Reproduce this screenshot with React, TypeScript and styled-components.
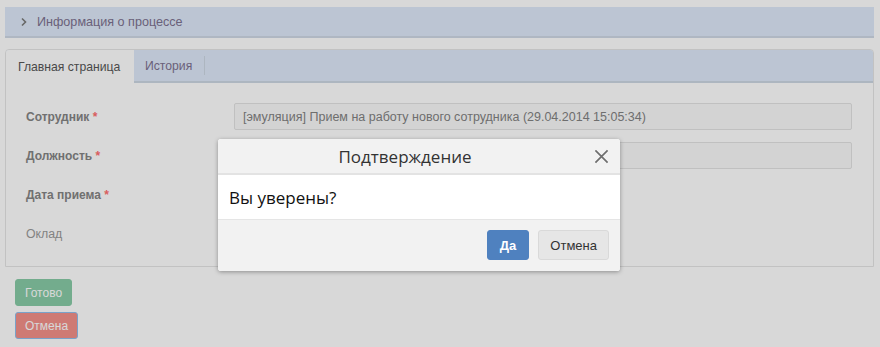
import styled, { createGlobalStyle } from "styled-components"

const Global = createGlobalStyle`
html, body {
  margin: 0;
  padding: 0;
  background: #ffffff;
}
body {
  font-family: "Liberation Sans", Arial, sans-serif;
  font-size: 12px;
}
`

const fields = [
  { label: "Сотрудник", required: true, value: "[эмуляция] Прием на работу нового сотрудника (29.04.2014 15:05:34)" },
  { label: "Должность", required: true, value: "" },
  { label: "Дата приема", required: true },
  { label: "Оклад", required: false },
]

const App = () => {
  return (
    <Page>
      <Global />
      <InfoBar>
        <Chevron viewBox="0 0 8 10">
          <path d="M2 1.5 L5.5 5 L2 8.5" fill="none" stroke="#7a7a7a" strokeWidth="1.6" />
        </Chevron>
        Информация о процессе
      </InfoBar>

      <TabPanel>
        <TabBar>
          <Tab $active>Главная страница</Tab>
          <Tab>История</Tab>
          <TabDivider />
        </TabBar>
        <Form>
          {fields.map((f) => (
            <Row key={f.label}>
              <Label $bold={f.required}>
                {f.label}
                {f.required && <Star> *</Star>}
              </Label>
              {f.value !== undefined && <Input>{f.value}</Input>}
            </Row>
          ))}
        </Form>
      </TabPanel>

      <Actions>
        <ActionButton $kind="ok">Готово</ActionButton>
        <ActionButton $kind="cancel">Отмена</ActionButton>
      </Actions>

      <Backdrop />
      <Modal>
        <ModalHeader>
          Подтверждение
          <Close viewBox="0 0 16 16">
            <path d="M1.5 1.5 L14.5 14.5 M14.5 1.5 L1.5 14.5" stroke="#6e6e6e" strokeWidth="1.8" />
          </Close>
        </ModalHeader>
        <ModalBody>Вы уверены?</ModalBody>
        <ModalFooter>
          <DialogButton $primary>Да</DialogButton>
          <DialogButton>Отмена</DialogButton>
        </ModalFooter>
      </Modal>
    </Page>
  )
}

const Page = styled.div`
  position: relative;
  min-height: 347px;
  padding: 7px 6px 0 5px;
  box-sizing: border-box;
`

const InfoBar = styled.div`
  height: 29px;
  background: #dee9f9;
  border-bottom: 2px solid #cfd9e6;
  display: flex;
  align-items: center;
  padding-left: 15px;
  color: #7d7290;
  font-size: 12.6px;
`

const Chevron = styled.svg`
  width: 8px;
  height: 10px;
  margin-right: 9px;
`

const TabPanel = styled.div`
  margin-top: 11px;
  border: 1px solid #e6e6e6;
  border-radius: 4px 4px 0 0;
  height: 218px;
  box-sizing: border-box;
`

const TabBar = styled.div`
  height: 33px;
  box-sizing: border-box;
  background: #dee9f9;
  border-bottom: 2px solid #cdd7e3;
  border-radius: 3px 3px 0 0;
  display: flex;
  align-items: stretch;
`

const Tab = styled.div<{ $active?: boolean }>`
  display: flex;
  align-items: center;
  padding: 0 12px 0 ${(p) => (p.$active ? "12px" : "11px")};
  width: ${(p) => (p.$active ? "128px" : "auto")};
  box-sizing: border-box;
  color: ${(p) => (p.$active ? "#575757" : "#7d7290")};
  background: ${(p) => (p.$active ? "#ffffff" : "transparent")};
  margin-bottom: ${(p) => (p.$active ? "-2px" : "0")};
  border-top-left-radius: ${(p) => (p.$active ? "3px" : "0")};
  font-size: 12.2px;
`

const TabDivider = styled.div`
  width: 1px;
  background: #cdd7e3;
  margin: 6px 0 6px 0;
`

const Form = styled.div`
  padding: 20px 21px 0 20px;
  display: flex;
  flex-direction: column;
  gap: 12px;
`

const Row = styled.div`
  display: flex;
  align-items: center;
  height: 27px;
`

const Label = styled.div<{ $bold?: boolean }>`
  width: 208px;
  color: ${(p) => (p.$bold ? "#858585" : "#9a9a9a")};
  font-weight: ${(p) => (p.$bold ? "bold" : "normal")};
  font-size: ${(p) => (p.$bold ? "12px" : "12.3px")};
`

const Star = styled.span`
  color: #ff6f6f;
`

const Input = styled.div`
  flex: 1;
  height: 27px;
  box-sizing: border-box;
  border: 1px solid #e3e3e3;
  border-radius: 2px;
  background: #fafafa;
  color: #828282;
  font-size: 12.5px;
  padding: 0 8px;
  display: flex;
  align-items: center;
  white-space: nowrap;
`

const Actions = styled.div`
  padding: 12px 0 0 10px;
  display: flex;
  flex-direction: column;
  align-items: flex-start;
  gap: 6px;
`

const ActionButton = styled.div<{ $kind: "ok" | "cancel" }>`
  height: 27px;
  box-sizing: border-box;
  padding: 0 9px;
  display: flex;
  align-items: center;
  border-radius: 3px;
  font-size: 12px;
  color: #ffffff;
  background: ${(p) => (p.$kind === "ok" ? "#88cca7" : "#f4918a")};
  border: 1px solid ${(p) => (p.$kind === "ok" ? "#88cca7" : "#8fc0ee")};
`

const Backdrop = styled.div`
  position: absolute;
  inset: 0;
  background: rgba(0, 0, 0, 0.153);
`

const Modal = styled.div`
  position: absolute;
  left: 218px;
  top: 139px;
  width: 402px;
  border-radius: 3px;
  overflow: hidden;
  background: #ffffff;
  box-shadow: 0 1px 4px rgba(0, 0, 0, 0.35);
  font-family: "Open Sans", "Liberation Sans", sans-serif;
`

const ModalHeader = styled.div`
  position: relative;
  height: 34px;
  background: #f2f2f2;
  border-bottom: 2px solid #e3e3e3;
  display: flex;
  align-items: center;
  justify-content: center;
  padding-right: 28px;
  font-size: 17px;
  color: #333333;
`

const Close = styled.svg`
  position: absolute;
  right: 11px;
  top: 10px;
  width: 15px;
  height: 15px;
`

const ModalBody = styled.div`
  height: 44px;
  display: flex;
  align-items: center;
  padding-left: 11px;
  font-size: 17px;
  color: #111111;
  border-bottom: 1px solid #e5e5e5;
`

const ModalFooter = styled.div`
  height: 51px;
  box-sizing: border-box;
  background: #f2f2f2;
  display: flex;
  align-items: center;
  justify-content: flex-end;
  gap: 9px;
  padding-right: 11px;
  padding-bottom: 1px;
`

const DialogButton = styled.div<{ $primary?: boolean }>`
  height: 30px;
  box-sizing: border-box;
  padding: 0 ${(p) => (p.$primary ? "12px" : "11px")};
  display: flex;
  align-items: center;
  border-radius: 3px;
  font-family: "Liberation Sans", Arial, sans-serif;
  font-size: 13px;
  font-weight: ${(p) => (p.$primary ? "bold" : "normal")};
  color: ${(p) => (p.$primary ? "#ffffff" : "#333333")};
  background: ${(p) => (p.$primary ? "#4f81bf" : "#e6e6e6")};
  border: 1px solid ${(p) => (p.$primary ? "#4f81bf" : "#d9d9d9")};
`

export default App
